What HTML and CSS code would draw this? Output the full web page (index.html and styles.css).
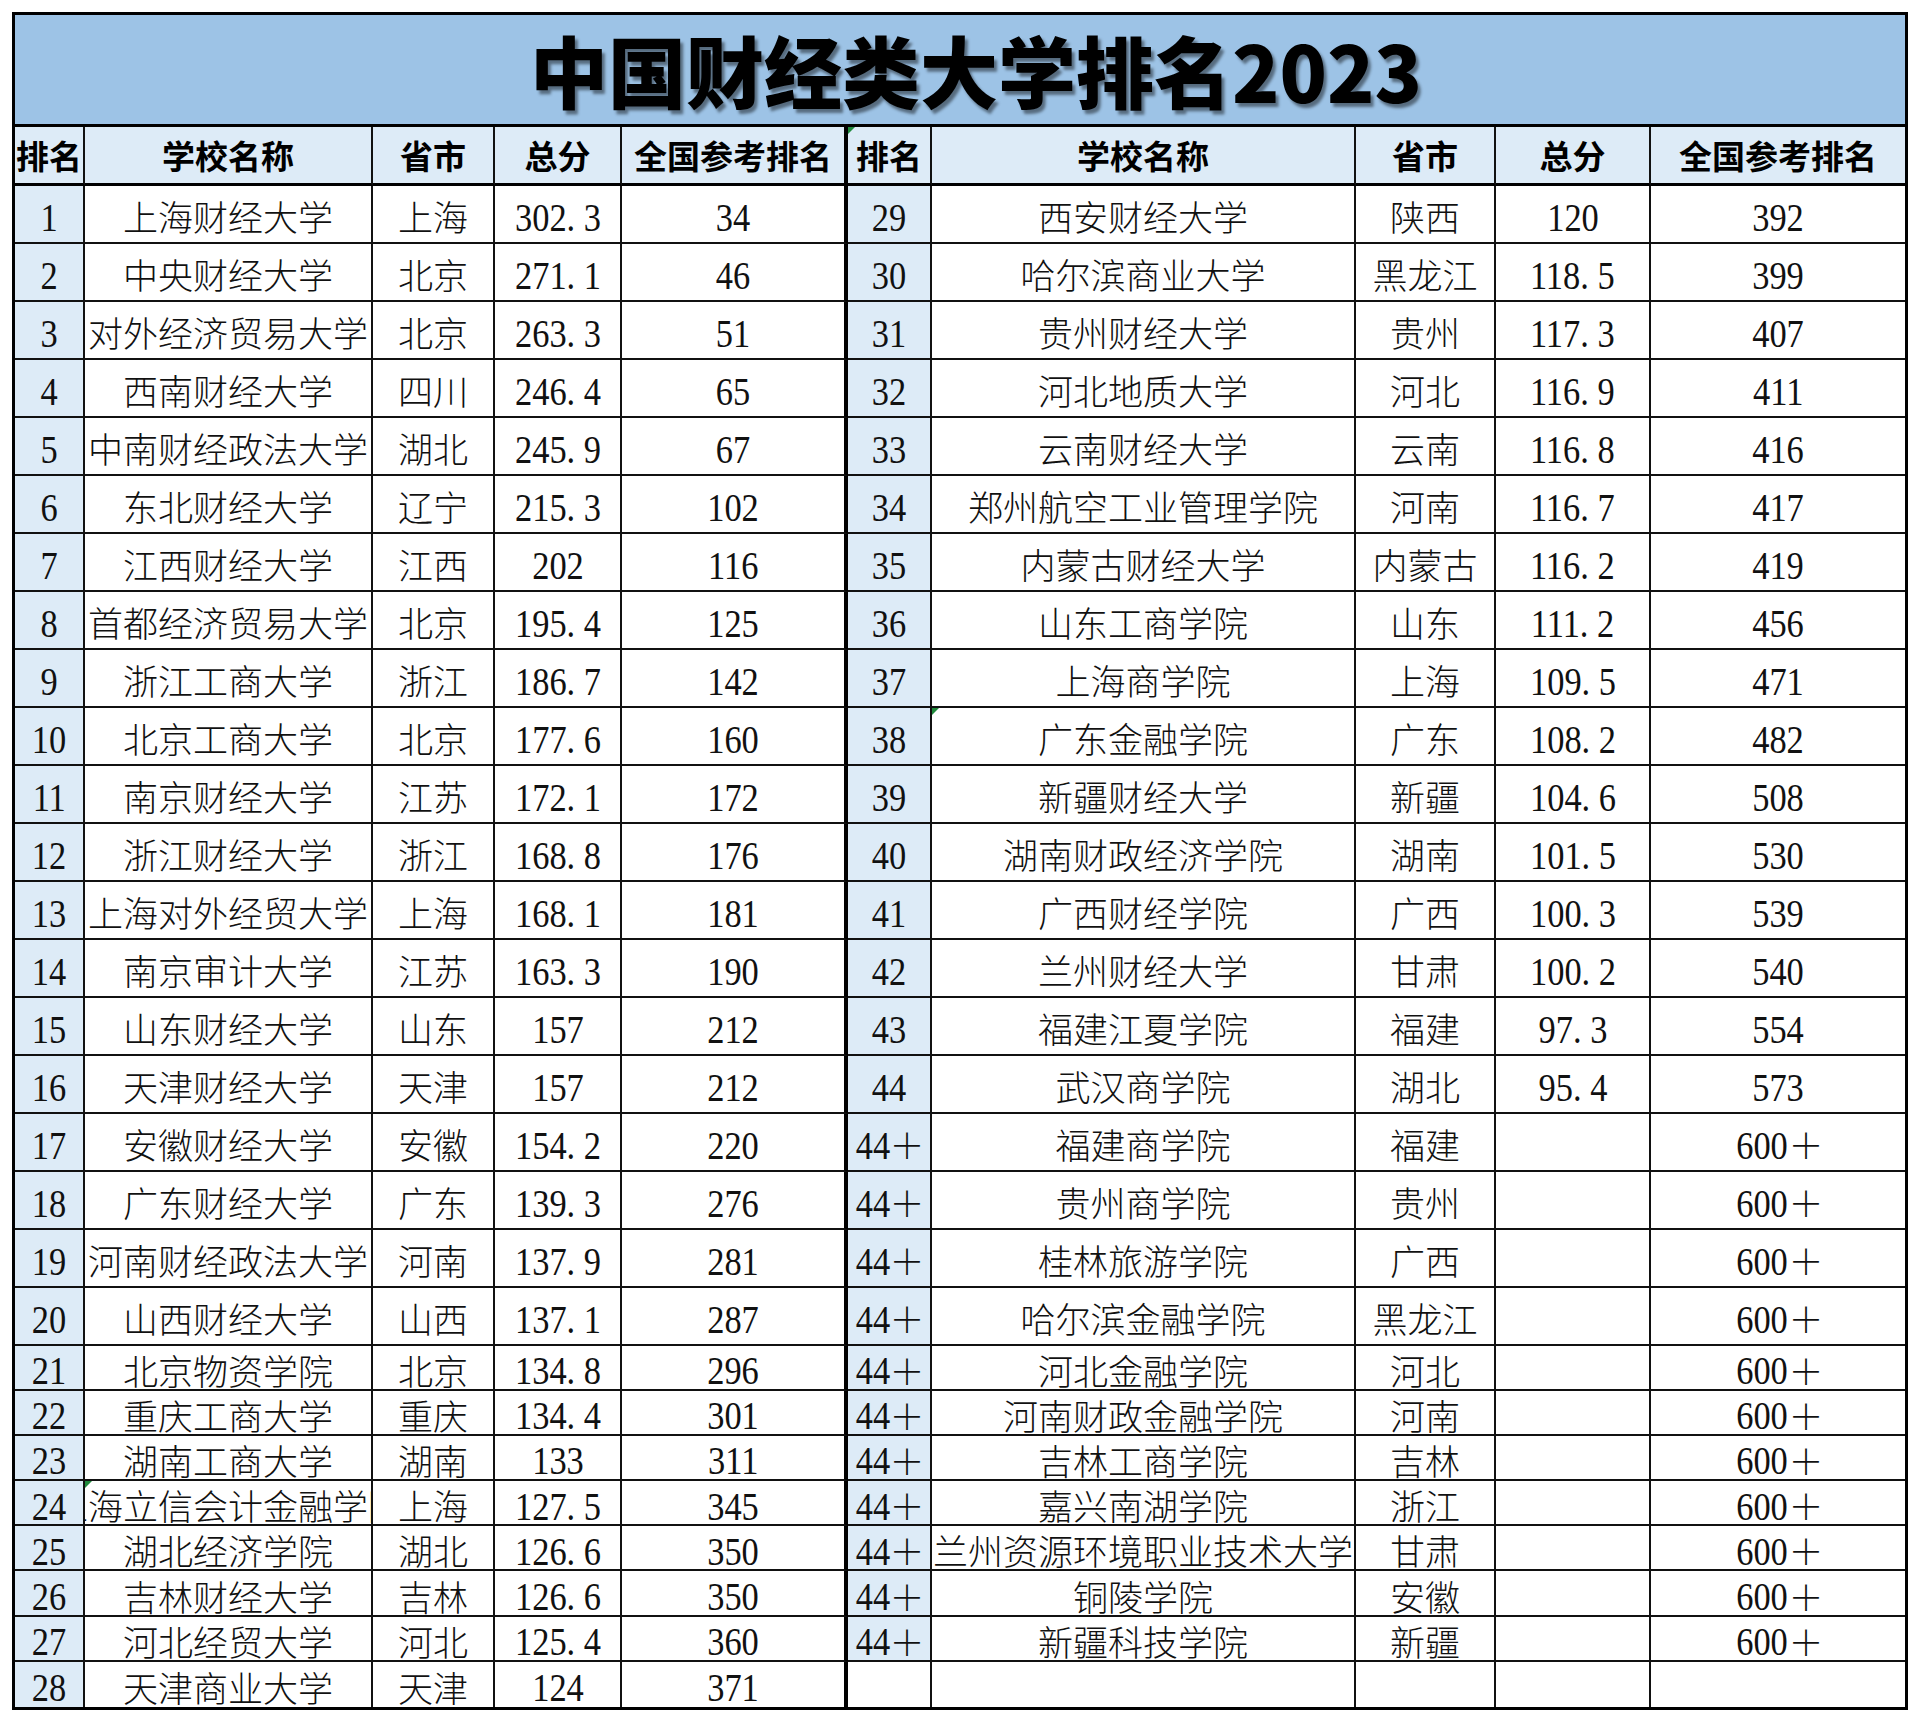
FILE: index.html
```html
<!DOCTYPE html>
<html lang="zh-CN">
<head>
<meta charset="utf-8">
<title>中国财经类大学排名2023</title>
<link rel="stylesheet" href="styles.css">
</head>
<body>
<div class="sheet">
  <div class="title">中国财经类大学排名2023</div>
  <div class="grid">
    <div class="c h">排名</div><div class="c h">学校名称</div><div class="c h">省市</div><div class="c h">总分</div><div class="c h s">全国参考排名</div>
    <div class="c h t">排名</div><div class="c h">学校名称</div><div class="c h">省市</div><div class="c h">总分</div><div class="c h e">全国参考排名</div>

    <div class="c r"><span class="n">1</span></div><div class="c">上海财经大学</div><div class="c">上海</div><div class="c"><span class="n">302<span class="d">.</span>3</span></div><div class="c s"><span class="n">34</span></div>
    <div class="c r"><span class="n">29</span></div><div class="c">西安财经大学</div><div class="c">陕西</div><div class="c"><span class="n">120</span></div><div class="c e"><span class="n">392</span></div>

    <div class="c r"><span class="n">2</span></div><div class="c">中央财经大学</div><div class="c">北京</div><div class="c"><span class="n">271<span class="d">.</span>1</span></div><div class="c s"><span class="n">46</span></div>
    <div class="c r"><span class="n">30</span></div><div class="c">哈尔滨商业大学</div><div class="c">黑龙江</div><div class="c"><span class="n">118<span class="d">.</span>5</span></div><div class="c e"><span class="n">399</span></div>

    <div class="c r"><span class="n">3</span></div><div class="c">对外经济贸易大学</div><div class="c">北京</div><div class="c"><span class="n">263<span class="d">.</span>3</span></div><div class="c s"><span class="n">51</span></div>
    <div class="c r"><span class="n">31</span></div><div class="c">贵州财经大学</div><div class="c">贵州</div><div class="c"><span class="n">117<span class="d">.</span>3</span></div><div class="c e"><span class="n">407</span></div>

    <div class="c r"><span class="n">4</span></div><div class="c">西南财经大学</div><div class="c">四川</div><div class="c"><span class="n">246<span class="d">.</span>4</span></div><div class="c s"><span class="n">65</span></div>
    <div class="c r"><span class="n">32</span></div><div class="c">河北地质大学</div><div class="c">河北</div><div class="c"><span class="n">116<span class="d">.</span>9</span></div><div class="c e"><span class="n">411</span></div>

    <div class="c r"><span class="n">5</span></div><div class="c">中南财经政法大学</div><div class="c">湖北</div><div class="c"><span class="n">245<span class="d">.</span>9</span></div><div class="c s"><span class="n">67</span></div>
    <div class="c r"><span class="n">33</span></div><div class="c">云南财经大学</div><div class="c">云南</div><div class="c"><span class="n">116<span class="d">.</span>8</span></div><div class="c e"><span class="n">416</span></div>

    <div class="c r"><span class="n">6</span></div><div class="c">东北财经大学</div><div class="c">辽宁</div><div class="c"><span class="n">215<span class="d">.</span>3</span></div><div class="c s"><span class="n">102</span></div>
    <div class="c r"><span class="n">34</span></div><div class="c">郑州航空工业管理学院</div><div class="c">河南</div><div class="c"><span class="n">116<span class="d">.</span>7</span></div><div class="c e"><span class="n">417</span></div>

    <div class="c r"><span class="n">7</span></div><div class="c">江西财经大学</div><div class="c">江西</div><div class="c"><span class="n">202</span></div><div class="c s"><span class="n">116</span></div>
    <div class="c r"><span class="n">35</span></div><div class="c">内蒙古财经大学</div><div class="c">内蒙古</div><div class="c"><span class="n">116<span class="d">.</span>2</span></div><div class="c e"><span class="n">419</span></div>

    <div class="c r"><span class="n">8</span></div><div class="c">首都经济贸易大学</div><div class="c">北京</div><div class="c"><span class="n">195<span class="d">.</span>4</span></div><div class="c s"><span class="n">125</span></div>
    <div class="c r"><span class="n">36</span></div><div class="c">山东工商学院</div><div class="c">山东</div><div class="c"><span class="n">111<span class="d">.</span>2</span></div><div class="c e"><span class="n">456</span></div>

    <div class="c r"><span class="n">9</span></div><div class="c">浙江工商大学</div><div class="c">浙江</div><div class="c"><span class="n">186<span class="d">.</span>7</span></div><div class="c s"><span class="n">142</span></div>
    <div class="c r"><span class="n">37</span></div><div class="c">上海商学院</div><div class="c">上海</div><div class="c"><span class="n">109<span class="d">.</span>5</span></div><div class="c e"><span class="n">471</span></div>

    <div class="c r"><span class="n">10</span></div><div class="c">北京工商大学</div><div class="c">北京</div><div class="c"><span class="n">177<span class="d">.</span>6</span></div><div class="c s"><span class="n">160</span></div>
    <div class="c r"><span class="n">38</span></div><div class="c t">广东金融学院</div><div class="c">广东</div><div class="c"><span class="n">108<span class="d">.</span>2</span></div><div class="c e"><span class="n">482</span></div>

    <div class="c r"><span class="n">11</span></div><div class="c">南京财经大学</div><div class="c">江苏</div><div class="c"><span class="n">172<span class="d">.</span>1</span></div><div class="c s"><span class="n">172</span></div>
    <div class="c r"><span class="n">39</span></div><div class="c">新疆财经大学</div><div class="c">新疆</div><div class="c"><span class="n">104<span class="d">.</span>6</span></div><div class="c e"><span class="n">508</span></div>

    <div class="c r"><span class="n">12</span></div><div class="c">浙江财经大学</div><div class="c">浙江</div><div class="c"><span class="n">168<span class="d">.</span>8</span></div><div class="c s"><span class="n">176</span></div>
    <div class="c r"><span class="n">40</span></div><div class="c">湖南财政经济学院</div><div class="c">湖南</div><div class="c"><span class="n">101<span class="d">.</span>5</span></div><div class="c e"><span class="n">530</span></div>

    <div class="c r"><span class="n">13</span></div><div class="c">上海对外经贸大学</div><div class="c">上海</div><div class="c"><span class="n">168<span class="d">.</span>1</span></div><div class="c s"><span class="n">181</span></div>
    <div class="c r"><span class="n">41</span></div><div class="c">广西财经学院</div><div class="c">广西</div><div class="c"><span class="n">100<span class="d">.</span>3</span></div><div class="c e"><span class="n">539</span></div>

    <div class="c r"><span class="n">14</span></div><div class="c">南京审计大学</div><div class="c">江苏</div><div class="c"><span class="n">163<span class="d">.</span>3</span></div><div class="c s"><span class="n">190</span></div>
    <div class="c r"><span class="n">42</span></div><div class="c">兰州财经大学</div><div class="c">甘肃</div><div class="c"><span class="n">100<span class="d">.</span>2</span></div><div class="c e"><span class="n">540</span></div>

    <div class="c r"><span class="n">15</span></div><div class="c">山东财经大学</div><div class="c">山东</div><div class="c"><span class="n">157</span></div><div class="c s"><span class="n">212</span></div>
    <div class="c r"><span class="n">43</span></div><div class="c">福建江夏学院</div><div class="c">福建</div><div class="c"><span class="n">97<span class="d">.</span>3</span></div><div class="c e"><span class="n">554</span></div>

    <div class="c r"><span class="n">16</span></div><div class="c">天津财经大学</div><div class="c">天津</div><div class="c"><span class="n">157</span></div><div class="c s"><span class="n">212</span></div>
    <div class="c r"><span class="n">44</span></div><div class="c">武汉商学院</div><div class="c">湖北</div><div class="c"><span class="n">95<span class="d">.</span>4</span></div><div class="c e"><span class="n">573</span></div>

    <div class="c r"><span class="n">17</span></div><div class="c">安徽财经大学</div><div class="c">安徽</div><div class="c"><span class="n">154<span class="d">.</span>2</span></div><div class="c s"><span class="n">220</span></div>
    <div class="c r"><span class="n p">44</span>＋</div><div class="c">福建商学院</div><div class="c">福建</div><div class="c"></div><div class="c e"><span class="n p">600</span>＋</div>

    <div class="c r"><span class="n">18</span></div><div class="c">广东财经大学</div><div class="c">广东</div><div class="c"><span class="n">139<span class="d">.</span>3</span></div><div class="c s"><span class="n">276</span></div>
    <div class="c r"><span class="n p">44</span>＋</div><div class="c">贵州商学院</div><div class="c">贵州</div><div class="c"></div><div class="c e"><span class="n p">600</span>＋</div>

    <div class="c r"><span class="n">19</span></div><div class="c">河南财经政法大学</div><div class="c">河南</div><div class="c"><span class="n">137<span class="d">.</span>9</span></div><div class="c s"><span class="n">281</span></div>
    <div class="c r"><span class="n p">44</span>＋</div><div class="c">桂林旅游学院</div><div class="c">广西</div><div class="c"></div><div class="c e"><span class="n p">600</span>＋</div>

    <div class="c r"><span class="n">20</span></div><div class="c">山西财经大学</div><div class="c">山西</div><div class="c"><span class="n">137<span class="d">.</span>1</span></div><div class="c s"><span class="n">287</span></div>
    <div class="c r"><span class="n p">44</span>＋</div><div class="c">哈尔滨金融学院</div><div class="c">黑龙江</div><div class="c"></div><div class="c e"><span class="n p">600</span>＋</div>

    <div class="c r"><span class="n">21</span></div><div class="c">北京物资学院</div><div class="c">北京</div><div class="c"><span class="n">134<span class="d">.</span>8</span></div><div class="c s"><span class="n">296</span></div>
    <div class="c r"><span class="n p">44</span>＋</div><div class="c">河北金融学院</div><div class="c">河北</div><div class="c"></div><div class="c e"><span class="n p">600</span>＋</div>

    <div class="c r"><span class="n">22</span></div><div class="c">重庆工商大学</div><div class="c">重庆</div><div class="c"><span class="n">134<span class="d">.</span>4</span></div><div class="c s"><span class="n">301</span></div>
    <div class="c r"><span class="n p">44</span>＋</div><div class="c">河南财政金融学院</div><div class="c">河南</div><div class="c"></div><div class="c e"><span class="n p">600</span>＋</div>

    <div class="c r"><span class="n">23</span></div><div class="c">湖南工商大学</div><div class="c">湖南</div><div class="c"><span class="n">133</span></div><div class="c s"><span class="n">311</span></div>
    <div class="c r"><span class="n p">44</span>＋</div><div class="c">吉林工商学院</div><div class="c">吉林</div><div class="c"></div><div class="c e"><span class="n p">600</span>＋</div>

    <div class="c r"><span class="n">24</span></div><div class="c t clip">上海立信会计金融学院</div><div class="c">上海</div><div class="c"><span class="n">127<span class="d">.</span>5</span></div><div class="c s"><span class="n">345</span></div>
    <div class="c r"><span class="n p">44</span>＋</div><div class="c">嘉兴南湖学院</div><div class="c">浙江</div><div class="c"></div><div class="c e"><span class="n p">600</span>＋</div>

    <div class="c r"><span class="n">25</span></div><div class="c">湖北经济学院</div><div class="c">湖北</div><div class="c"><span class="n">126<span class="d">.</span>6</span></div><div class="c s"><span class="n">350</span></div>
    <div class="c r"><span class="n p">44</span>＋</div><div class="c">兰州资源环境职业技术大学</div><div class="c">甘肃</div><div class="c"></div><div class="c e"><span class="n p">600</span>＋</div>

    <div class="c r"><span class="n">26</span></div><div class="c">吉林财经大学</div><div class="c">吉林</div><div class="c"><span class="n">126<span class="d">.</span>6</span></div><div class="c s"><span class="n">350</span></div>
    <div class="c r"><span class="n p">44</span>＋</div><div class="c">铜陵学院</div><div class="c">安徽</div><div class="c"></div><div class="c e"><span class="n p">600</span>＋</div>

    <div class="c r"><span class="n">27</span></div><div class="c">河北经贸大学</div><div class="c">河北</div><div class="c"><span class="n">125<span class="d">.</span>4</span></div><div class="c s"><span class="n">360</span></div>
    <div class="c r"><span class="n p">44</span>＋</div><div class="c">新疆科技学院</div><div class="c">新疆</div><div class="c"></div><div class="c e"><span class="n p">600</span>＋</div>

    <div class="c r b"><span class="n">28</span></div><div class="c b">天津商业大学</div><div class="c b">天津</div><div class="c b"><span class="n">124</span></div><div class="c s b"><span class="n">371</span></div>
    <div class="c b"></div><div class="c b"></div><div class="c b"></div><div class="c b"></div><div class="c e b"></div>
  </div>
</div>
</body>
</html>
```

FILE: styles.css
```css
* {
  box-sizing: border-box;
  margin: 0;
  padding: 0;
}

body {
  background: #ffffff;
  padding: 12px 0 0 12px;
}

.sheet {
  width: 1896px;
  border: 3px solid #000;
}

.title {
  height: 111.5px;
  background: #9dc3e6;
  border-bottom: 3.5px solid #000;
  display: flex;
  align-items: center;
  justify-content: center;
  padding-left: 32px;
  font-family: "Noto Sans CJK SC", sans-serif;
  font-weight: 900;
  font-size: 78px;
  line-height: 1;
  color: #000;
  text-shadow: 3px 4px 3px rgba(0, 0, 0, 0.45);
}

.grid {
  display: grid;
  grid-template-columns: 70px 288px 122px 127px 226px 84px 424px 140px 155px 254px;
  grid-template-rows: 59px repeat(20, 58px) repeat(8, 45.2px);
}

.c {
  position: relative;
  display: flex;
  justify-content: center;
  align-items: center;
  padding-top: 4px;
  white-space: nowrap;
  border-right: 2px solid #111;
  border-bottom: 2px solid #111;
  font-family: "Noto Sans CJK SC", sans-serif;
  font-weight: 300;
  font-size: 35px;
  line-height: 1;
  color: #111;
  background: #fff;
}

.c.clip {
  overflow: hidden;
}

.c.h {
  background: #ddebf7;
  border-bottom: 3.5px solid #000;
  padding: 2px 0 0;
  font-family: "Noto Sans CJK SC", sans-serif;
  font-weight: 700;
  font-size: 33px;
  color: #000;
}

.c.r {
  background: #ddebf7;
}

.c.s {
  border-right: 4px solid #000;
}

.c.e {
  border-right: none;
}

.c.b {
  border-bottom: none;
}

.n {
  display: inline-block;
  margin-bottom: -4px;
  font-family: "Liberation Serif", serif;
  font-weight: 400;
  font-size: 40px;
  line-height: 1;
  transform: scaleX(0.86);
}

.n.p {
  margin-right: -4px;
}

.d {
  margin-right: 10px;
}

.t::before {
  content: "";
  position: absolute;
  left: 0;
  top: 0;
  border-top: 7px solid #1f8a3c;
  border-right: 7px solid transparent;
}
```
